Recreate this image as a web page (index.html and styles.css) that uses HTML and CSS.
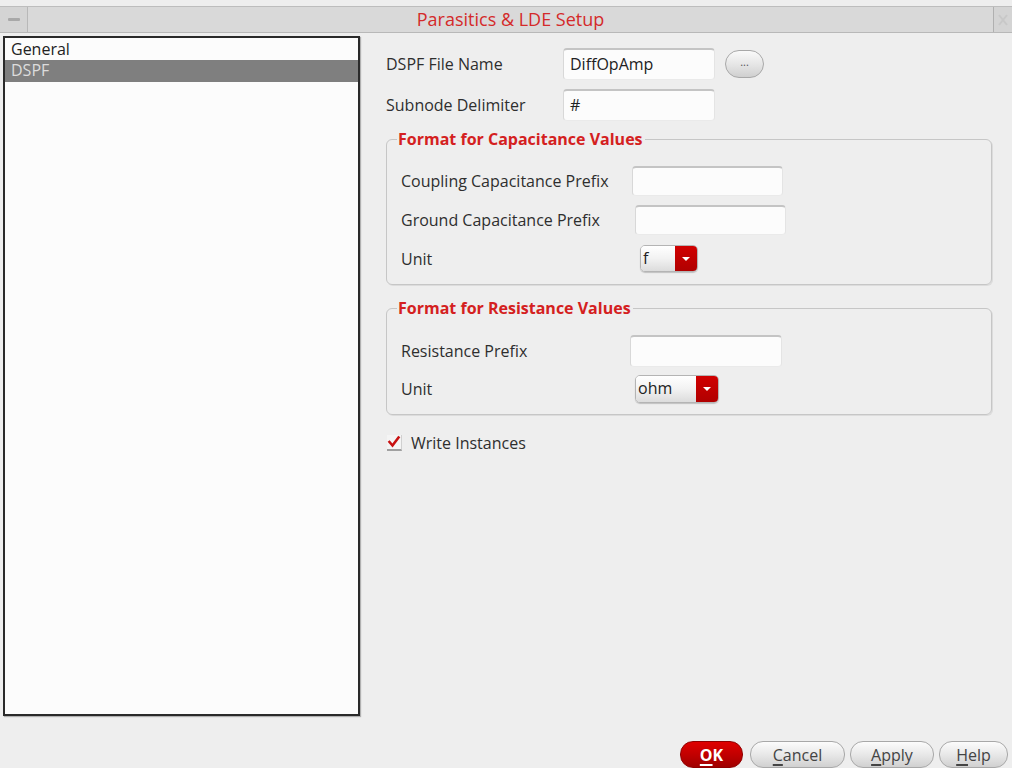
FILE: index.html
```html
<!DOCTYPE html>
<html>
<head>
<meta charset="utf-8">
<link rel="stylesheet" href="styles.css">
</head>
<body>
<div class="window">
  <div class="titlebar">
    <div class="tb-btn tb-left"><span class="dash"></span></div>
    <div class="tb-title">Parasitics &amp; LDE Setup</div>
    <div class="tb-btn tb-right">
      <svg width="12" height="14" viewBox="0 0 12 14"><path d="M2 2 L10 12 M10 2 L2 12" stroke="#c8c8c8" stroke-width="2" fill="none"/></svg>
    </div>
  </div>
  <div class="main">
    <div class="list">
      <div class="item">General</div>
      <div class="item selected">DSPF</div>
    </div>
    <div class="content">
      <div class="row top-row">
        <div class="label w-top">DSPF File Name</div>
        <div class="input w152">DiffOpAmp</div>
        <div class="browse">...</div>
      </div>
      <div class="row top-row">
        <div class="label w-top">Subnode Delimiter</div>
        <div class="input w152">#</div>
      </div>
      <fieldset class="group g1">
        <legend>Format for Capacitance Values</legend>
        <div class="row r-coup">
          <div class="label w-coup">Coupling Capacitance Prefix</div>
          <div class="input w151 h30"></div>
        </div>
        <div class="row r-gnd">
          <div class="label w-gnd">Ground Capacitance Prefix</div>
          <div class="input w151 h30"></div>
        </div>
        <div class="row r-unit1">
          <div class="label w-unit1">Unit</div>
          <div class="combo c-f"><span class="cval">f</span><span class="carrow"><span class="tri"></span></span></div>
        </div>
      </fieldset>
      <fieldset class="group g2">
        <legend>Format for Resistance Values</legend>
        <div class="row r-res">
          <div class="label w-res">Resistance Prefix</div>
          <div class="input w152"></div>
        </div>
        <div class="row r-unit2">
          <div class="label w-unit2">Unit</div>
          <div class="combo c-ohm"><span class="cval">ohm</span><span class="carrow"><span class="tri"></span></span></div>
        </div>
      </fieldset>
      <div class="check-row">
        <span class="checkbox">
          <svg width="14" height="14" viewBox="0 0 14 14"><path d="M2.5 7 L5.5 10.5 L11.5 2.5" stroke="#c81010" stroke-width="2.6" fill="none" stroke-linecap="square"/></svg>
        </span>
        <span class="check-label">Write Instances</span>
      </div>
    </div>
  </div>
  <div class="footer">
    <div class="btn ok"><u>O</u>K</div>
    <div class="btn b-cancel"><u>C</u>ancel</div>
    <div class="btn b-apply"><u>A</u>pply</div>
    <div class="btn b-help"><u>H</u>elp</div>
  </div>
</div>
</body>
</html>
```
FILE: styles.css
```css
* { box-sizing: border-box; }
html, body { margin: 0; padding: 0; }
body {
  width: 1012px;
  height: 768px;
  overflow: hidden;
  background: #eeeeee;
  font-family: "Open Sans", "DejaVu Sans", sans-serif;
  font-size: 16px;
  color: #2e2e2e;
}
.window {
  display: flex;
  flex-direction: column;
  height: 768px;
}
.titlebar {
  margin-top: 6px;
  height: 27px;
  display: flex;
  align-items: stretch;
  background: #d9d9d9;
  border-top: 1px solid #bdbdbd;
  border-bottom: 1px solid #b8b8b8;
}
.tb-btn {
  display: flex;
  align-items: center;
  justify-content: center;
  background: #d4d4d4;
}
.tb-left {
  width: 28px;
  border-right: 1px solid #b8b8b8;
}
.dash {
  width: 12px;
  height: 3px;
  background: #a8a8a8;
  border-radius: 1px;
}
.tb-title {
  flex: 1;
  text-align: center;
  color: #d42a2a;
  font-size: 18px;
  line-height: 25px;
}
.tb-right {
  width: 19px;
  border-left: 1px solid #b0b0b0;
}
.main {
  display: flex;
  height: 683px;
  padding-top: 3px;
}
.list {
  margin-left: 3px;
  width: 357px;
  height: 680px;
  background: #fcfcfc;
  border: 2px solid #2a2a2a;
  box-shadow: 1px 1px 1px #b0b0b0;
  padding-top: 1px;
}
.item {
  height: 21px;
  line-height: 21px;
  padding-left: 6px;
  color: #222222;
}
.item.selected {
  background: #7f7f7f;
  color: #dcdcdc;
  height: 22px;
}
.content {
  margin-left: 26px;
  padding-top: 12px;
  width: 606px;
}
.row {
  display: flex;
  align-items: center;
}
.top-row { margin-bottom: 9px; }
.label { flex: none; }
.w-top { width: 177px; }
.input {
  flex: none;
  height: 32px;
  background: #fcfcfc;
  border-radius: 4px;
  border-top: 2px solid #c4c4c4;
  border-left: 1px solid #d8d8d8;
  border-right: 1px solid #e4e4e4;
  border-bottom: 1px solid #eaeaea;
  padding-left: 6px;
  line-height: 28px;
  color: #222;
}
.w152 { width: 152px; }
.w151 { width: 151px; }
.h30 { height: 30px; }
.browse {
  margin-left: 10px;
  width: 39px;
  height: 28px;
  border-radius: 14px;
  border: 1px solid #a8a8a8;
  background: linear-gradient(#fafafa, #e2e2e2 60%, #cfcfcf);
  text-align: center;
  font-size: 11px;
  line-height: 22px;
  color: #555;
}
.group {
  margin: 0;
  padding: 0 0 0 14px;
  border: 1px solid #c6c6c6;
  border-radius: 6px;
  box-shadow: 1px 1px 0 #dcdcdc;
}
.group legend {
  padding: 0 2px 0 1px;
  margin-left: -4px;
  color: #d42020;
  font-weight: bold;
  font-size: 16px;
  line-height: 18px;
}
.g1 { margin-top: 9px; height: 155px; }
.g2 { margin-top: 14px; height: 116px; }
.r-coup { margin-top: 18px; }
.r-gnd { margin-top: 9px; }
.r-unit1 { margin-top: 10px; }
.r-res { margin-top: 18px; }
.r-unit2 { margin-top: 8px; }
.w-coup { width: 231px; }
.w-gnd { width: 234px; }
.w-unit1 { width: 239px; }
.w-res { width: 229px; }
.w-unit2 { width: 234px; }
.combo {
  display: flex;
  height: 28px;
  border-radius: 5px;
  border: 1px solid #b4b4b4;
  overflow: hidden;
  box-shadow: 0 1px 1px #c0c0c0;
}
.c-f { width: 58px; height: 27px; }
.c-ohm { width: 84px; }
.cval {
  flex: 1;
  background: linear-gradient(#ffffff, #f2f2f2 50%, #dcdcdc);
  padding-left: 2px;
  line-height: 25px;
  color: #222;
}
.carrow {
  width: 22px;
  background: linear-gradient(#d00000, #b00000);
  display: flex;
  align-items: center;
  justify-content: center;
}
.tri {
  width: 0;
  height: 0;
  border-left: 4px solid transparent;
  border-right: 4px solid transparent;
  border-top: 4px solid #ffffff;
}
.check-row {
  display: flex;
  align-items: center;
  margin-top: 17px;
  margin-left: 1px;
}
.checkbox {
  width: 15px;
  height: 16px;
  background: #f4f4f4;
  border-bottom: 2px solid #a0a0a0;
  border-right: 1px solid #d0d0d0;
  display: flex;
  align-items: center;
  justify-content: center;
}
.check-label { margin-left: 9px; }
.footer {
  margin-top: 25px;
  display: flex;
  justify-content: flex-end;
  gap: 5px;
  padding-right: 4px;
}
.btn {
  height: 27px;
  border-radius: 13px;
  border: 1px solid #a8a8a8;
  background: linear-gradient(#fcfcfc, #e6e6e6 55%, #d0d0d0);
  text-align: center;
  line-height: 27px;
  font-size: 16px;
  color: #444;
}
.btn u { text-decoration-thickness: 2px; text-underline-offset: 3px; }
.ok {
  width: 63px;
  background: linear-gradient(#e00000, #bb0000 60%, #a00000);
  border-color: #900000;
  color: #ffffff;
  font-weight: bold;
  margin-right: 2px;
}
.b-cancel { width: 95px; }
.b-apply { width: 84px; }
.b-help { width: 69px; }
```
